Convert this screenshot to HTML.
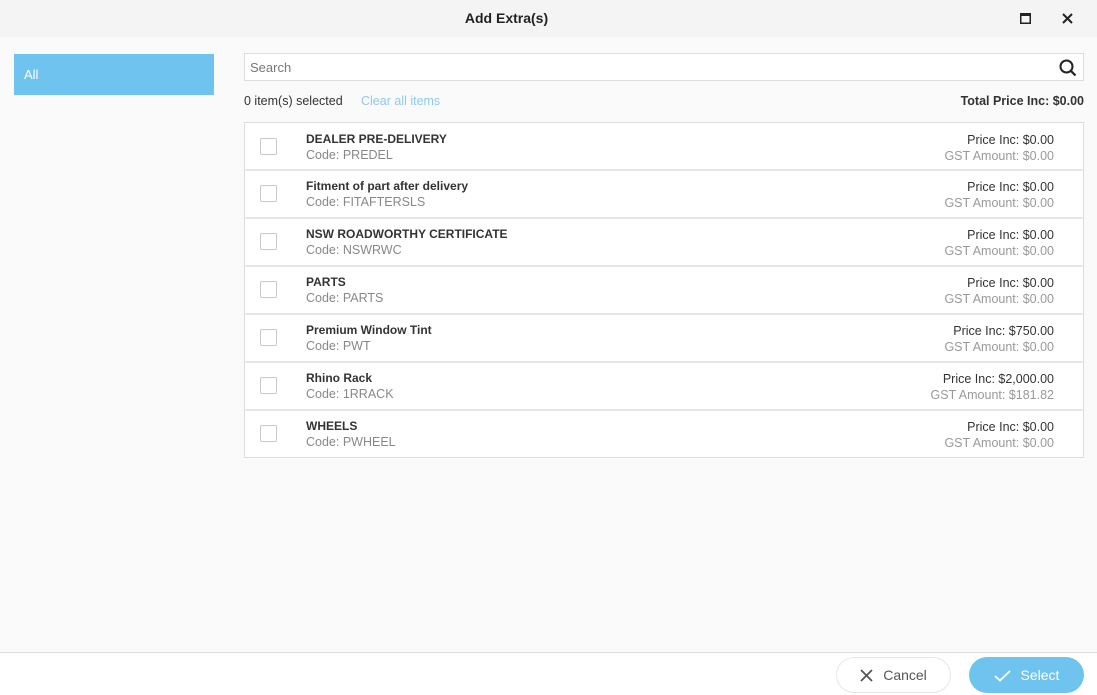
<!DOCTYPE html>
<html><head><style>
*{margin:0;padding:0;box-sizing:border-box}
body{width:1097px;height:695px;background:#fafafa;font-family:"Liberation Sans",sans-serif;font-size:12.5px;color:#333;position:relative;overflow:hidden}
.hdr{position:absolute;left:0;top:0;width:1097px;height:37px;background:#f4f4f4}
.title{position:absolute;top:10px;left:0;width:1013px;text-align:center;font-weight:bold;font-size:14px;color:#222}
.side{position:absolute;left:14px;top:54px;width:200px;height:41px;background:#6fc3ef;color:#fff;padding:13px 10px;font-size:13px}
.search{position:absolute;left:244px;top:53px;width:840px;height:28px;background:#fff;border:1px solid #ddd;padding:6px 5px;color:#777;font-size:13px}
.sel{position:absolute;left:244px;top:94px;font-size:12.5px}
.clr{position:absolute;left:361px;top:94px;color:#8fcaed;font-size:12.5px}
.tot{position:absolute;right:13px;top:94px;font-weight:bold;font-size:12.5px}
.list{position:absolute;left:244px;top:122px;width:840px;border:1px solid #ddd;background:#fff}
.row{height:48px;border-top:2px solid #e6e6e6;position:relative}
.row:first-child{border-top:none;height:46px}
.cb{position:absolute;left:15px;top:14px;width:17px;height:17px;border:1px solid #c8c8c8;border-radius:2px;background:#fff}
.row:first-child .cb{top:15px}
.nm{position:absolute;left:61px;top:8px;font-weight:bold;font-size:12px;color:#333}
.row:first-child .nm,.row:first-child .cd,.row:first-child .pr{margin-top:1px}
.cd{position:absolute;left:61px;top:24px;color:#888;font-size:12.5px}
.pr{position:absolute;right:29px;top:8px;text-align:right;line-height:16px}
.pr span{color:#999}
.foot{position:absolute;left:0;top:652px;width:1097px;height:43px;background:#fff;border-top:1px solid #ddd}
.btn{position:absolute;top:4px;height:36px;width:115px;border-radius:18px;font-size:14px;display:flex;align-items:center;justify-content:center;gap:10px}
.cancel{left:836px;border:1px solid #e6e6e6;color:#555}
.select{left:969px;background:#6fc3ef;color:#fff}
</style></head><body>
<div class="hdr"><div class="title">Add Extra(s)</div>
<svg style="position:absolute;left:1020px;top:13px" width="11" height="11"><rect x="0.75" y="0.75" width="9.5" height="9.5" fill="none" stroke="#222" stroke-width="1.5"/><rect x="0" y="0" width="11" height="3" fill="#222"/></svg>
<svg style="position:absolute;left:1062px;top:13px" width="11" height="11"><path d="M1 1L10 10M10 1L1 10" stroke="#222" stroke-width="2"/></svg>
</div>
<div class="side">All</div>
<div class="search">Search
<svg style="position:absolute;right:6px;top:5px" width="18" height="18"><circle cx="7.5" cy="7.5" r="6" fill="none" stroke="#222" stroke-width="2"/><path d="M12 12L16.5 16.5" stroke="#222" stroke-width="2.2"/></svg></div>
<div class="sel">0 item(s) selected</div>
<div class="clr">Clear all items</div>
<div class="tot">Total Price Inc: $0.00</div>
<div class="list">
<div class="row"><div class="cb"></div><div class="nm">DEALER PRE-DELIVERY</div><div class="cd">Code: PREDEL</div><div class="pr">Price Inc: $0.00<br><span>GST Amount: $0.00</span></div></div>
<div class="row"><div class="cb"></div><div class="nm">Fitment of part after delivery</div><div class="cd">Code: FITAFTERSLS</div><div class="pr">Price Inc: $0.00<br><span>GST Amount: $0.00</span></div></div>
<div class="row"><div class="cb"></div><div class="nm">NSW ROADWORTHY CERTIFICATE</div><div class="cd">Code: NSWRWC</div><div class="pr">Price Inc: $0.00<br><span>GST Amount: $0.00</span></div></div>
<div class="row"><div class="cb"></div><div class="nm">PARTS</div><div class="cd">Code: PARTS</div><div class="pr">Price Inc: $0.00<br><span>GST Amount: $0.00</span></div></div>
<div class="row"><div class="cb"></div><div class="nm">Premium Window Tint</div><div class="cd">Code: PWT</div><div class="pr">Price Inc: $750.00<br><span>GST Amount: $0.00</span></div></div>
<div class="row"><div class="cb"></div><div class="nm">Rhino Rack</div><div class="cd">Code: 1RRACK</div><div class="pr">Price Inc: $2,000.00<br><span>GST Amount: $181.82</span></div></div>
<div class="row"><div class="cb"></div><div class="nm">WHEELS</div><div class="cd">Code: PWHEEL</div><div class="pr">Price Inc: $0.00<br><span>GST Amount: $0.00</span></div></div>
</div>
<div class="foot">
<div class="btn cancel"><svg width="13" height="13"><path d="M1 1L12 12M12 1L1 12" stroke="#555" stroke-width="1.8"/></svg>Cancel</div>
<div class="btn select"><svg width="17" height="13"><path d="M1 7L6 11.5L16 2" fill="none" stroke="#fff" stroke-width="1.8"/></svg>Select</div>
</div>
</body></html>
